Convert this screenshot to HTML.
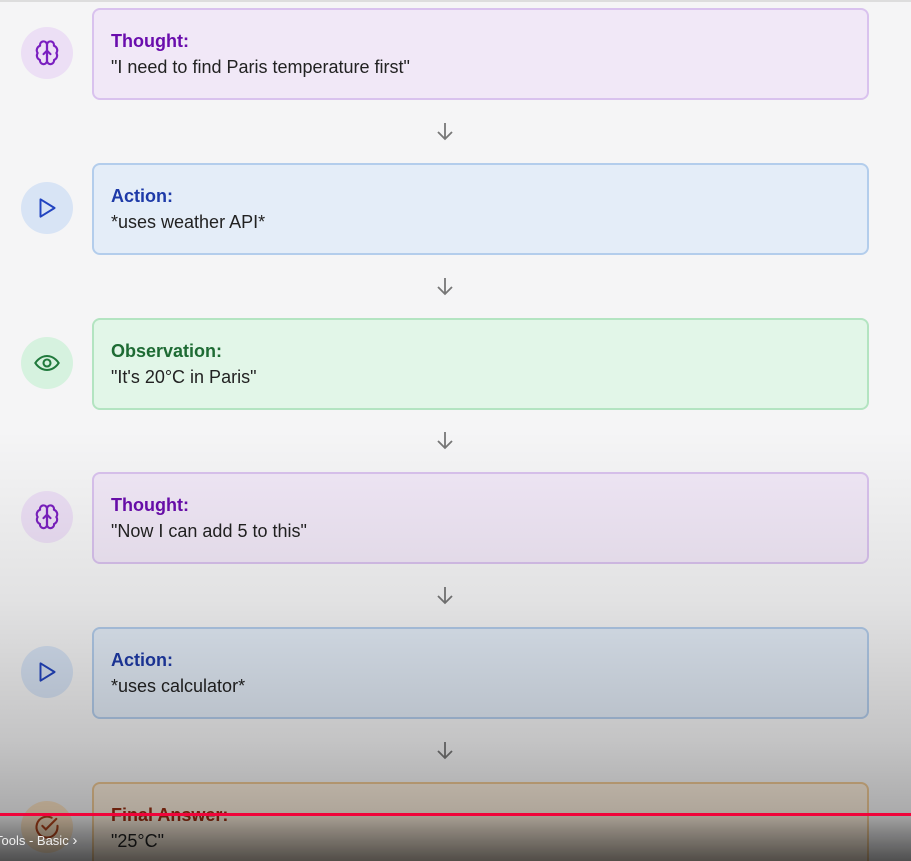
<!DOCTYPE html>
<html style="overflow:hidden;height:861px"><head><style>
body{margin:0;width:911px;height:861px;overflow:hidden;background:#f5f5f6;font-family:"Liberation Sans",sans-serif;position:relative}
.card{position:absolute;left:92px;width:777px;height:92px;border:2px solid;border-radius:8px;box-sizing:border-box;padding:21px 0 0 17px}
.card b{display:block;font-size:18px;margin-bottom:5px}
.card span{font-size:18px;color:#222}
.ic{position:absolute;left:21px;width:52px;height:52px;border-radius:50%;display:flex;align-items:center;justify-content:center}
.ar{position:absolute;left:436px}
.p{background:#f1e8f7;border-color:#d9c2ee}.p b{color:#6a0dad}
.b{background:#e4edf8;border-color:#b3cdec}.b b{color:#1e3aa8}
.g{background:#e2f6e8;border-color:#b3e4c1}.g b{color:#1e6b34}
.o{background:#fbeedd;border-color:#efc995}.o b{color:#9a2f12}
</style></head><body>
<div style="position:absolute;top:0;left:0;right:0;height:2px;background:#ddd"></div>

<div class="ic" style="top:27px;background:#ecdff5"><svg width="28" height="28" viewBox="0 0 24 24" fill="none" stroke="#7a1fc0" stroke-width="1.8" stroke-linecap="round" stroke-linejoin="round"><path d="M12 5a3 3 0 1 0-5.9.8A4 4 0 0 0 4 12a4 4 0 0 0 2 6 3 3 0 0 0 6 1z"/><path d="M12 5a3 3 0 1 1 5.9.8A4 4 0 0 1 20 12a4 4 0 0 1-2 6 3 3 0 0 1-6 1z"/><path d="M12 5v14M9 13l3-3 3 3"/></svg></div>
<div class="card p" style="top:8px"><b>Thought:</b><span>"I need to find Paris temperature first"</span></div>
<svg class="ar" style="top:121px" width="18" height="20" viewBox="0 0 18 20" fill="none" stroke="#777" stroke-width="1.8"><path d="M9 2v16M2 11l7 7 7-7"/></svg>

<div class="ic" style="top:182px;background:#d8e4f5"><svg width="26" height="26" viewBox="0 0 24 24" fill="none" stroke="#2244c0" stroke-width="1.8" stroke-linejoin="round"><path d="M6 4l13 8-13 8z"/></svg></div>
<div class="card b" style="top:163px"><b>Action:</b><span>*uses weather API*</span></div>
<svg class="ar" style="top:276px" width="18" height="20" viewBox="0 0 18 20" fill="none" stroke="#777" stroke-width="1.8"><path d="M9 2v16M2 11l7 7 7-7"/></svg>

<div class="ic" style="top:337px;background:#d6f2df"><svg width="28" height="28" viewBox="0 0 24 24" fill="none" stroke="#207a3c" stroke-width="1.8"><path d="M2 12s3.5-6 10-6 10 6 10 6-3.5 6-10 6S2 12 2 12z"/><circle cx="12" cy="12" r="3"/></svg></div>
<div class="card g" style="top:318px"><b>Observation:</b><span>"It's 20°C in Paris"</span></div>
<svg class="ar" style="top:430px" width="18" height="20" viewBox="0 0 18 20" fill="none" stroke="#777" stroke-width="1.8"><path d="M9 2v16M2 11l7 7 7-7"/></svg>

<div class="ic" style="top:491px;background:#ecdff5"><svg width="28" height="28" viewBox="0 0 24 24" fill="none" stroke="#7a1fc0" stroke-width="1.8" stroke-linecap="round" stroke-linejoin="round"><path d="M12 5a3 3 0 1 0-5.9.8A4 4 0 0 0 4 12a4 4 0 0 0 2 6 3 3 0 0 0 6 1z"/><path d="M12 5a3 3 0 1 1 5.9.8A4 4 0 0 1 20 12a4 4 0 0 1-2 6 3 3 0 0 1-6 1z"/><path d="M12 5v14M9 13l3-3 3 3"/></svg></div>
<div class="card p" style="top:472px"><b>Thought:</b><span>"Now I can add 5 to this"</span></div>
<svg class="ar" style="top:585px" width="18" height="20" viewBox="0 0 18 20" fill="none" stroke="#777" stroke-width="1.8"><path d="M9 2v16M2 11l7 7 7-7"/></svg>

<div class="ic" style="top:646px;background:#d8e4f5"><svg width="26" height="26" viewBox="0 0 24 24" fill="none" stroke="#2244c0" stroke-width="1.8" stroke-linejoin="round"><path d="M6 4l13 8-13 8z"/></svg></div>
<div class="card b" style="top:627px"><b>Action:</b><span>*uses calculator*</span></div>
<svg class="ar" style="top:740px" width="18" height="20" viewBox="0 0 18 20" fill="none" stroke="#777" stroke-width="1.8"><path d="M9 2v16M2 11l7 7 7-7"/></svg>

<div class="ic" style="top:801px;background:#fbe3c4"><svg width="28" height="28" viewBox="0 0 24 24" fill="none" stroke="#b5451b" stroke-width="1.8" stroke-linecap="round"><path d="M21 11v1a9 9 0 1 1-5-8"/><path d="M8 11l3 3 9-9"/></svg></div>
<div class="card o" style="top:782px;height:79px;border-bottom:none;border-radius:8px 8px 0 0"><b>Final Answer:</b><span>"25°C"</span></div>

<div style="position:absolute;left:0;top:0;width:911px;height:861px;background:linear-gradient(to bottom,rgba(0,0,0,0) 0px,rgba(0,0,0,0) 430px,rgba(0,0,0,0.08) 600px,rgba(0,0,0,0.2) 740px,rgba(0,0,0,0.3) 812px,rgba(0,0,0,0.45) 830px,rgba(0,0,0,0.68) 861px)"></div>
<div style="position:absolute;left:0;top:813px;width:911px;height:3px;background:#f0043a"></div>
<div style="position:absolute;left:-5px;top:832px;color:#eee;font-size:13px">Tools - Basic <span style="font-size:15px">›</span></div>
</body></html>
